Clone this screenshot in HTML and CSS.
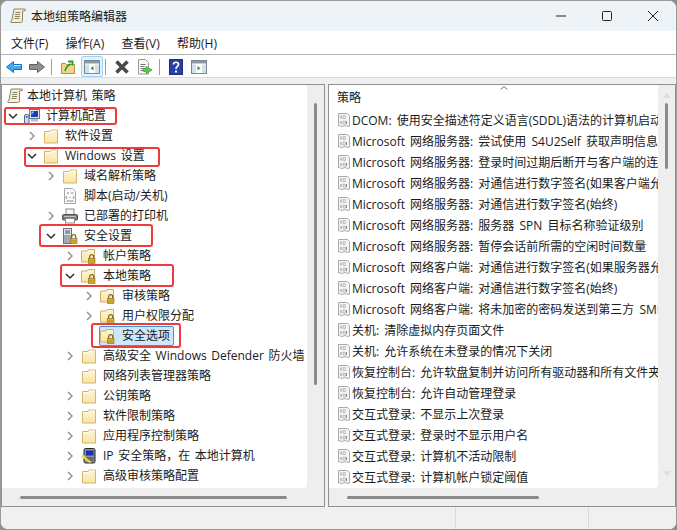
FILE: index.html
```html
<!DOCTYPE html>
<html lang="zh-CN">
<head>
<meta charset="utf-8">
<title>本地组策略编辑器</title>
<link rel="stylesheet" href="styles.css">
</head>
<body>
<svg class="defs" width="0" height="0" aria-hidden="true">
  <defs>
    <linearGradient id="fold" x1="0" y1="0" x2="0" y2="1">
      <stop offset="0" stop-color="#fef6d6"/>
      <stop offset="1" stop-color="#f9e3a0"/>
    </linearGradient>
    <symbol id="folder" viewBox="0 0 16 16">
      <path d="M1.500 3.500h5.500l1-1.500h6.500v13h-13z" fill="url(#fold)" stroke="#d5b46c"/>
      <path d="M2 4.500h5.500l1-1.500h5.500" fill="none" stroke="#fff" stroke-opacity=".8"/>
    </symbol>
    <symbol id="lockfolder" viewBox="0 0 16 16">
      <path d="M.5 3h5.500l1-1.500h6.500v12.500h-13z" fill="url(#fold)" stroke="#cfae6a"/>
      <path d="M8.700 10.500v-1.800a2 2 0 0 1 4 0v1.800" fill="none" stroke="#77672f" stroke-width="1.200"/>
      <rect x="7.500" y="10.500" width="6.500" height="5" fill="#dcae35" stroke="#8b6a18" stroke-width=".6"/>
      <path d="M8 12.500h5.500M8 14h5.500" stroke="#b98c22" stroke-width=".6"/>
    </symbol>
    <symbol id="scroll" viewBox="0 0 16 16">
      <path d="M4 1h10.500q1 0 1 1.500l-3 .5v9.500q0 2-2 2h-9.500q-1-1.500 1-2.500z" fill="#f6efd6" stroke="#8a8468"/>
      <path d="M5.500 4.500h5M5 6.500h5M5 8.500h5M4.500 10.500h5" stroke="#8a8468"/>
    </symbol>
    <symbol id="computer" viewBox="0 0 16 16">
      <rect x="5.500" y="1.500" width="10" height="9" fill="#dfe6ef" stroke="#66778f"/>
      <path d="M7 3h7v6h-7z" fill="#1c3fb0"/>
      <path d="M7.500 3.500h3l-3 3.500z" fill="#8bc0f0"/>
      <rect x="7" y="11" width="7" height="2.500" fill="#b8bfcc"/>
      <rect x=".5" y="6.500" width="4.500" height="9" rx="1.500" fill="#d6dde6" stroke="#4f6a8c"/>
      <circle cx="2.700" cy="9" r="1.100" fill="#3668c8"/>
    </symbol>
    <symbol id="script" viewBox="0 0 16 16">
      <path d="M2.500 .5h8l3 3v12h-11z" fill="#fafafa" stroke="#a5a5a5"/>
      <path d="M5 5h2M9 5h2.500M5 8l-1 1.500 1 1.500M11 8l1 1.500-1 1.500M7.500 9.500h1M4.500 13h7" fill="none" stroke="#888"/>
    </symbol>
    <symbol id="printer" viewBox="0 0 16 16">
      <rect x="4" y="1" width="8" height="6" fill="#f6f6f6" stroke="#8a8a8a"/>
      <rect x=".5" y="6.500" width="15" height="5.500" rx="1" fill="#777b80" stroke="#4f5357"/>
      <rect x="3.500" y="10.500" width="9" height="4.500" fill="#fff" stroke="#8a8a8a"/>
      <path d="M2 8.500h12" stroke="#c0c4c8"/>
    </symbol>
    <symbol id="serverlock" viewBox="0 0 16 16">
      <rect x="1.500" y=".5" width="8" height="15" fill="#dfe2e6" stroke="#6b7079"/>
      <path d="M3 3h5M3 5h5" stroke="#4d5560"/>
      <rect x="2" y="7" width="7" height="8" fill="#a1a8b2"/>
      <path d="M9.700 10.500v-1.800a2 2 0 0 1 4 0v1.800" fill="none" stroke="#77672f" stroke-width="1.200"/>
      <rect x="8.500" y="10.500" width="6.500" height="5" fill="#dcae35" stroke="#8b6a18" stroke-width=".6"/>
      <path d="M9 12.500h5.500M9 14h5.500" stroke="#b98c22" stroke-width=".6"/>
    </symbol>
    <symbol id="ipsec" viewBox="0 0 16 16">
      <rect x="3" y=".5" width="11" height="14.500" rx="1.500" fill="#8f9499" stroke="#222"/>
      <rect x="5" y="2.500" width="7.500" height="5" fill="#1d2fb4"/>
      <path d="M5.500 10h7M5.500 12h7" stroke="#3e3e3e"/>
      <path d="M2 8.500l7.500 6" stroke="#efdf3e" stroke-width="2.200"/>
      <circle cx="2.200" cy="8.700" r="1.800" fill="#efdf3e"/>
    </symbol>
    <symbol id="policy" viewBox="0 0 12 14">
      <path d="M.5.500h9l2 2v10.500q-1.500 1-3 0t-3 0-3 0-2 0z" fill="#f5f5f5" stroke="#a9a9a9"/>
      <path d="M3 2.500v3M3 8v3M8.500 8v3" stroke="#8d8d8d"/>
      <rect x="5.200" y="2.700" width="2" height="2.800" fill="none" stroke="#a4afbc" stroke-width=".8"/>
      <rect x="5.200" y="8.200" width="2" height="2.800" fill="none" stroke="#a4afbc" stroke-width=".8"/>
    </symbol>
    <symbol id="chev-r" viewBox="0 0 10 10"><path d="M3 1l4 4-4 4" fill="none" stroke="#8e8e8e" stroke-width="1.400"/></symbol>
    <symbol id="chev-d" viewBox="0 0 10 10"><path d="M1 3l4 4 4-4" fill="none" stroke="#2f2f2f" stroke-width="1.500"/></symbol>
  </defs>
</svg>

<div class="window">
  <header class="titlebar">
    <svg class="app-icon"><use href="#scroll"/></svg>
    <span class="title">本地组策略编辑器</span>
    <div class="caption">
      <svg class="cap" viewBox="0 0 12 12"><path d="M1 6h10" stroke="#222" stroke-width="1"/></svg>
      <svg class="cap" viewBox="0 0 12 12"><rect x="1.500" y="1.500" width="9" height="9" rx="1" fill="none" stroke="#222"/></svg>
      <svg class="cap" viewBox="0 0 12 12"><path d="M1 1l10 10M11 1l-10 10" stroke="#222"/></svg>
    </div>
  </header>

  <nav class="menubar">
    <span>文件(F)</span><span>操作(A)</span><span>查看(V)</span><span>帮助(H)</span>
  </nav>

  <div class="toolbar">
    <svg class="tool" viewBox="0 0 16 16"><path d="M7.500 2.500v3h8v5h-8v3l-7-5.500z" fill="#43a9ee" stroke="#1b6fb6"/><path d="M8 6.500h6.500" stroke="#bfe6ff"/></svg>
    <svg class="tool" viewBox="0 0 16 16"><path d="M8.500 2.500v3h-8v5h8v3l7-5.500z" fill="#8f8f8f" stroke="#606060"/></svg>
    <i class="sep"></i>
    <svg class="tool up" viewBox="0 0 16 16"><path d="M1.500 4.500h4l1 1h8v9h-13z" fill="#f5d583" stroke="#b89044"/><path d="M5 12c1-4 3-6 6-7M8 2.500h4.500v4" fill="none" stroke="#2f9a2f" stroke-width="1.800"/></svg>
    <span class="tool-on"><svg class="tool-in" viewBox="0 0 16 16"><rect x=".5" y="1.500" width="15" height="13" fill="#fff" stroke="#7d8790"/><path d="M1 2h14v2.500h-14z" fill="#8c98a4"/><path d="M1 5.500h4v8.500h-4zM11 5.500h4v8.500h-4z" fill="#cfe0ee"/><path d="M9.500 7v4.500l-3-2.250z" fill="#2f9a3f"/></svg></span>
    <i class="sep"></i>
    <svg class="tool x" viewBox="0 0 16 16"><path d="M2.500 2.500l11 11M13.500 2.500l-11 11" stroke="#4a4a4a" stroke-width="3.600"/></svg>
    <svg class="tool" viewBox="0 0 16 16"><path d="M1.500.5h7l3 3v11.500h-10z" fill="#fbfaf2" stroke="#9a9a8c"/><path d="M3.500 5.500h5M3.500 7.500h4M3.500 9.500h4M3.500 11.500h3" stroke="#777"/><path d="M9 7.500v2h-2.500v3h2.500v2l6-3.500z" fill="#5ac84e" stroke="#2f9a2f" stroke-width=".7"/></svg>
    <i class="sep"></i>
    <svg class="tool help" viewBox="0 0 14 16"><rect x=".5" y=".5" width="13" height="15" fill="#2a3fa8" stroke="#1d2a78"/><path d="M4.500 5.500c0-3 5-3 5 0 0 2-2.500 2-2.500 4.500" fill="none" stroke="#fff" stroke-width="1.700"/><rect x="6" y="11.500" width="2" height="2" fill="#fff"/></svg>
    <svg class="tool view" viewBox="0 0 16 16"><rect x=".5" y="1.500" width="15" height="13" fill="#fff" stroke="#7d8790"/><path d="M1 2h14v2.500h-14z" fill="#8c98a4"/><path d="M1 5.500h4v8.500h-4zM11 5.500h4v8.500h-4z" fill="#cfe0ee"/><path d="M6.500 7v4.500l3-2.250z" fill="#2f9a3f"/></svg>
  </div>

  <main class="panes">
    <section class="pane pane-tree">
      <div class="content tree">
        <div class="row root"><svg class="ico"><use href="#scroll"/></svg><span>本地计算机 策略</span></div>
        <div class="row d0"><svg class="arr"><use href="#chev-d"/></svg><svg class="ico"><use href="#computer"/></svg><span>计算机配置</span><b class="mark m1"></b></div>
        <div class="row d1"><svg class="arr"><use href="#chev-r"/></svg><svg class="ico"><use href="#folder"/></svg><span>软件设置</span></div>
        <div class="row d1"><svg class="arr"><use href="#chev-d"/></svg><svg class="ico"><use href="#folder"/></svg><span>Windows 设置</span><b class="mark m2"></b></div>
        <div class="row d2"><svg class="arr"><use href="#chev-r"/></svg><svg class="ico"><use href="#folder"/></svg><span>域名解析策略</span></div>
        <div class="row d2"><i class="arr"></i><svg class="ico"><use href="#script"/></svg><span>脚本(启动/关机)</span></div>
        <div class="row d2"><svg class="arr"><use href="#chev-r"/></svg><svg class="ico"><use href="#printer"/></svg><span>已部署的打印机</span></div>
        <div class="row d2"><svg class="arr"><use href="#chev-d"/></svg><svg class="ico"><use href="#serverlock"/></svg><span>安全设置</span><b class="mark m3"></b></div>
        <div class="row d3"><svg class="arr"><use href="#chev-r"/></svg><svg class="ico"><use href="#lockfolder"/></svg><span>帐户策略</span></div>
        <div class="row d3"><svg class="arr"><use href="#chev-d"/></svg><svg class="ico"><use href="#lockfolder"/></svg><span>本地策略</span><b class="mark m4"></b></div>
        <div class="row d4"><svg class="arr"><use href="#chev-r"/></svg><svg class="ico"><use href="#lockfolder"/></svg><span>审核策略</span></div>
        <div class="row d4"><svg class="arr"><use href="#chev-r"/></svg><svg class="ico"><use href="#lockfolder"/></svg><span>用户权限分配</span></div>
        <div class="row d4"><i class="arr"></i><div class="selected"><svg class="ico"><use href="#lockfolder"/></svg><span>安全选项</span></div><b class="mark m5"></b></div>
        <div class="row d3"><svg class="arr"><use href="#chev-r"/></svg><svg class="ico"><use href="#folder"/></svg><span>高级安全 Windows Defender 防火墙</span></div>
        <div class="row d3"><i class="arr"></i><svg class="ico"><use href="#folder"/></svg><span>网络列表管理器策略</span></div>
        <div class="row d3"><svg class="arr"><use href="#chev-r"/></svg><svg class="ico"><use href="#folder"/></svg><span>公钥策略</span></div>
        <div class="row d3"><svg class="arr"><use href="#chev-r"/></svg><svg class="ico"><use href="#folder"/></svg><span>软件限制策略</span></div>
        <div class="row d3"><svg class="arr"><use href="#chev-r"/></svg><svg class="ico"><use href="#folder"/></svg><span>应用程序控制策略</span></div>
        <div class="row d3"><svg class="arr"><use href="#chev-r"/></svg><svg class="ico"><use href="#ipsec"/></svg><span>IP 安全策略，在 本地计算机</span></div>
        <div class="row d3"><svg class="arr"><use href="#chev-r"/></svg><svg class="ico"><use href="#folder"/></svg><span>高级审核策略配置</span></div>
      </div>
      <div class="vscroll tree-v"><i class="vthumb"></i></div>
      <div class="hscroll tree-h"><i class="hthumb"></i></div>
      <div class="corner"></div>
    </section>

    <section class="pane pane-list">
      <div class="content list">
        <div class="list-head"><span>策略</span><svg class="sort" viewBox="0 0 8 4"><path d="M.5 3.500l3.500-3 3.500 3" fill="none" stroke="#777"/></svg></div>
        <div class="item"><svg class="pol"><use href="#policy"/></svg><span>DCOM: 使用安全描述符定义语言(SDDL)语法的计算机启动限制</span></div>
        <div class="item"><svg class="pol"><use href="#policy"/></svg><span>Microsoft 网络服务器: 尝试使用 S4U2Self 获取声明信息</span></div>
        <div class="item"><svg class="pol"><use href="#policy"/></svg><span>Microsoft 网络服务器: 登录时间过期后断开与客户端的连接</span></div>
        <div class="item"><svg class="pol"><use href="#policy"/></svg><span>Microsoft 网络服务器: 对通信进行数字签名(如果客户端允许)</span></div>
        <div class="item"><svg class="pol"><use href="#policy"/></svg><span>Microsoft 网络服务器: 对通信进行数字签名(始终)</span></div>
        <div class="item"><svg class="pol"><use href="#policy"/></svg><span>Microsoft 网络服务器: 服务器 SPN 目标名称验证级别</span></div>
        <div class="item"><svg class="pol"><use href="#policy"/></svg><span>Microsoft 网络服务器: 暂停会话前所需的空闲时间数量</span></div>
        <div class="item"><svg class="pol"><use href="#policy"/></svg><span>Microsoft 网络客户端: 对通信进行数字签名(如果服务器允许)</span></div>
        <div class="item"><svg class="pol"><use href="#policy"/></svg><span>Microsoft 网络客户端: 对通信进行数字签名(始终)</span></div>
        <div class="item"><svg class="pol"><use href="#policy"/></svg><span>Microsoft 网络客户端: 将未加密的密码发送到第三方 SMB 服务器</span></div>
        <div class="item"><svg class="pol"><use href="#policy"/></svg><span>关机: 清除虚拟内存页面文件</span></div>
        <div class="item"><svg class="pol"><use href="#policy"/></svg><span>关机: 允许系统在未登录的情况下关闭</span></div>
        <div class="item"><svg class="pol"><use href="#policy"/></svg><span>恢复控制台: 允许软盘复制并访问所有驱动器和所有文件夹</span></div>
        <div class="item"><svg class="pol"><use href="#policy"/></svg><span>恢复控制台: 允许自动管理登录</span></div>
        <div class="item"><svg class="pol"><use href="#policy"/></svg><span>交互式登录: 不显示上次登录</span></div>
        <div class="item"><svg class="pol"><use href="#policy"/></svg><span>交互式登录: 登录时不显示用户名</span></div>
        <div class="item"><svg class="pol"><use href="#policy"/></svg><span>交互式登录: 计算机不活动限制</span></div>
        <div class="item"><svg class="pol"><use href="#policy"/></svg><span>交互式登录: 计算机帐户锁定阈值</span></div>
      </div>
      <div class="vscroll list-v">
        <svg class="sbarrow" viewBox="0 0 8 5"><path d="M0 5l4-5 4 5z" fill="#dedede"/></svg>
        <i class="vthumb"></i>
        <svg class="sbarrow down" viewBox="0 0 8 5"><path d="M0 0l4 5 4-5z" fill="#dedede"/></svg>
      </div>
      <div class="hscroll list-h"><i class="hthumb"></i></div>
      <div class="corner"></div>
    </section>
  </main>

  <footer class="statusbar">
    <div class="st st-a"></div>
    <div class="st st-b"></div>
    <div class="st st-c"></div>
  </footer>
</div>
</body>
</html>
```

FILE: styles.css
```css
* { box-sizing: border-box; }
html, body { margin: 0; padding: 0; }
body {
  width: 677px;
  height: 530px;
  overflow: hidden;
  background: #8f8f8f;
  font-family: "Open Sans", "Noto Sans CJK SC", sans-serif;
  font-size: 12px;
  color: #1a1a1a;
}
.defs { position: absolute; }

.window {
  width: 677px;
  height: 530px;
  display: flex;
  flex-direction: column;
  background: #f0f0f0;
  border: 1px solid #9a9a9a;
  border-radius: 8px;
  overflow: hidden;
}

.titlebar {
  height: 30px;
  flex: none;
  display: flex;
  align-items: center;
  padding-left: 9px;
  background: #edf3f7;
}
.app-icon { width: 16px; height: 16px; margin-right: 5px; }
.title { font-size: 12px; }
.caption { margin-left: auto; display: flex; align-items: center; }
.cap { width: 12px; height: 12px; margin: 0 17px; }

.menubar {
  height: 24px;
  flex: none;
  display: flex;
  align-items: center;
  gap: 17.3px;
  padding-left: 10px;
  background: #fff;
  border-bottom: 1px solid #b4b4b4;
}

.toolbar {
  height: 23px;
  flex: none;
  display: flex;
  align-items: center;
  padding: 1px 0 0 5px;
  background: #fff;
  border-bottom: 1px solid #dcdcdc;
}
.tool { width: 16px; height: 16px; margin-right: 7px; flex: none; }
.tool.up { margin-right: 5px; }
.tool.help { width: 14px; margin-left: 1px; margin-right: 8px; }
.tool-in { width: 16px; height: 16px; }
.tool-on {
  width: 22px;
  height: 21px;
  display: flex;
  align-items: center;
  justify-content: center;
  background: #e5f3ff;
  border: 1px solid #99d1ff;
  border-radius: 2px;
  flex: none;
}
.sep { width: 1px; height: 16px; background: #a0a0a0; flex: none; margin: 0 8px 0 -1px; }
.tool-on + .sep { margin-left: 2px; }

.panes {
  flex: none;
  height: 423px;
  margin-top: 6px;
  display: flex;
  gap: 3px;
}
.pane {
  display: grid;
  grid-template-columns: 1fr 17px;
  grid-template-rows: 1fr 18px;
  background: #eee;
  border: 1px solid #8e9296;
  overflow: hidden;
}
.pane-tree { width: 324px; }
.pane-list { width: 348px; }

.content {
  background: #fff;
  border-bottom-right-radius: 4px;
  overflow: hidden;
  min-width: 0;
}
.tree { padding-top: 1px; word-spacing: 1.5px; }
.row {
  position: relative;
  height: 20px;
  display: flex;
  align-items: center;
  white-space: nowrap;
}
.row > span, .selected > span { line-height: 20px; }
.root { padding-left: 1px; }
.root .ico { margin-right: 4px; }
.d0 { padding-left: 4px; }
.d1 { padding-left: 23px; }
.d2 { padding-left: 42px; }
.d3 { padding-left: 61px; }
.d4 { padding-left: 80px; }
.arr { width: 14px; height: 10px; flex: none; display: block; }
.ico { width: 16px; height: 16px; flex: none; margin: 0 6px 0 4px; }
.selected {
  display: flex;
  align-items: center;
  height: 20px;
  width: 75px;
  margin-left: 3px;
  background: #cce8ff;
  border: 1px solid #4a90d0;
  border-radius: 2px;
}
.selected .ico { margin: 0 6px 0 0; }

.mark {
  position: absolute;
  border: 2px solid #ee3a3a;
  border-radius: 3px;
  pointer-events: none;
}
.m1 { left: 2px; top: 1px; width: 113px; height: 18px; }
.m2 { left: 22px; top: 1px; width: 136px; height: 20px; }
.m3 { left: 37px; top: -2px; width: 114px; height: 23px; }
.m4 { left: 58px; top: -2px; width: 114px; height: 23px; }
.m5 { left: 89px; top: -3px; width: 90px; height: 25px; }

.list { word-spacing: 2px; }
.list-head {
  position: relative;
  height: 24px;
  padding: 5px 0 0 8px;
  line-height: 16px;
}
.sort { position: absolute; left: 171px; top: 1px; width: 8px; height: 4px; }
.item {
  height: 21px;
  display: flex;
  align-items: center;
  padding-left: 9px;
  white-space: nowrap;
}
.pol { width: 12px; height: 14px; flex: none; margin-right: 2px; }

.vscroll {
  display: flex;
  flex-direction: column;
  align-items: center;
  padding-top: 18px;
}
.vthumb { width: 3px; background: #8a8a8a; border-radius: 2px; display: block; }
.tree-v .vthumb { height: 282px; }
.list-v { padding-top: 8px; }
.list-v .vthumb { height: 66px; margin-top: 5px; }
.sbarrow { width: 8px; height: 5px; flex: none; }
.sbarrow.down { margin-top: 302px; }

.hscroll { display: flex; align-items: center; }
.hthumb { height: 3px; background: #8a8a8a; border-radius: 2px; display: block; }
.tree-h { padding-left: 18px; }
.tree-h .hthumb { width: 267px; }
.list-h { padding-left: 18px; }
.list-h .hthumb { width: 192px; }

.statusbar {
  flex: 1;
  display: flex;
  background: #f0f0f0;
  padding-top: 1px;
}
.st { border-right: 1px solid #d9d9d9; height: 100%; }
.st-a { width: 455px; }
.st-b { width: 133px; }
.st-c { flex: 1; border-right: 0; }
```
